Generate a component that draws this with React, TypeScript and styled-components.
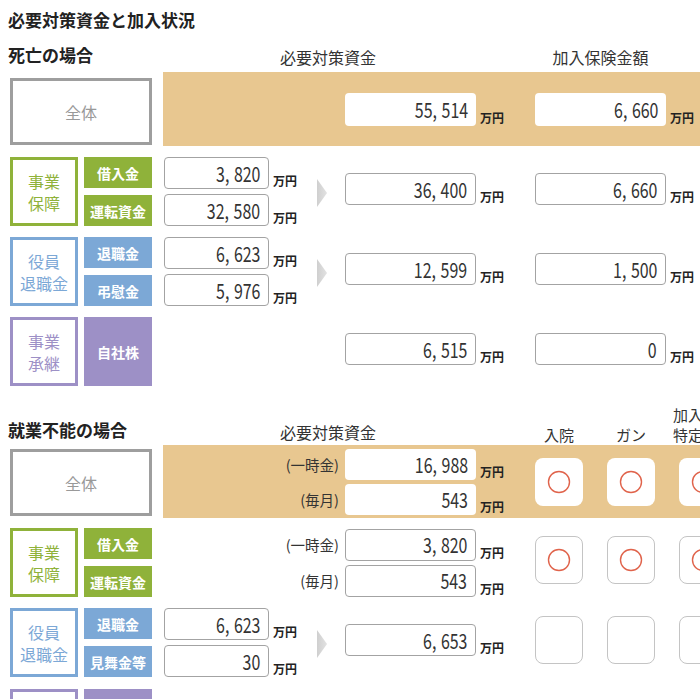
import React from "react";
import styled, { createGlobalStyle } from "styled-components";

const GlobalStyle = createGlobalStyle`
  html, body { margin: 0; padding: 0; background: #fff; overflow: hidden; }
  body { font-family: "Noto Sans CJK JP", "Noto Sans", sans-serif; color: #333; }
`;

const COLORS = {
  green: "#8fb23a",
  blue: "#7ca8d6",
  purple: "#9d90c6",
  band: "#e8c790",
  gray: "#9e9e9e",
};

const Page = styled.div`
  width: 900px;
  padding-top: 8px;
`;

const Title = styled.h1`
  margin: 0 0 0 8px;
  font-size: 17px;
  line-height: 24px;
  font-weight: 700;
  color: #222;
`;

const HeaderRow = styled.div<{ $h: number; $mt: number }>`
  display: flex;
  align-items: flex-end;
  height: ${(p) => p.$h}px;
  margin-top: ${(p) => p.$mt}px;
`;

const SectionTitle = styled.h2<{ $pb: number }>`
  margin: 0;
  flex: none;
  width: 163px;
  padding: 0 0 ${(p) => p.$pb}px 8px;
  box-sizing: border-box;
  font-size: 17px;
  line-height: 24px;
  font-weight: 700;
  color: #222;
  white-space: nowrap;
`;

const ColHead = styled.div<{ $w: number; $ml?: number; $pb: number; $fs?: number }>`
  flex: none;
  width: ${(p) => p.$w}px;
  margin-left: ${(p) => p.$ml ?? 0}px;
  padding-bottom: ${(p) => p.$pb}px;
  display: flex;
  flex-direction: column;
  align-items: center;
  font-size: ${(p) => p.$fs ?? 15}px;
  line-height: 20px;
  color: #333;
  white-space: nowrap;
`;

const Row = styled.div<{ $mt: number; $top?: boolean }>`
  display: flex;
  align-items: ${(p) => (p.$top ? "flex-start" : "center")};
  margin-top: ${(p) => p.$mt}px;
  padding-left: 10px;
`;

const Left = styled.div<{ $mt?: number }>`
  flex: none;
  width: 142px;
  display: flex;
  gap: 6px;
  margin-top: ${(p) => p.$mt ?? 0}px;
`;

const WholeBox = styled.div<{ $h: number }>`
  width: 142px;
  height: ${(p) => p.$h}px;
  box-sizing: border-box;
  border: 3px solid ${COLORS.gray};
  color: #999;
  font-size: 16px;
  display: flex;
  align-items: center;
  justify-content: center;
  background: #fff;
`;

const CategoryBox = styled.div<{ $c: string }>`
  width: 68px;
  height: 69px;
  box-sizing: border-box;
  border: 3px solid ${(p) => p.$c};
  color: ${(p) => p.$c};
  font-size: 16px;
  line-height: 22px;
  display: flex;
  align-items: center;
  justify-content: center;
  text-align: center;
  white-space: pre-line;
  background: #fff;
`;

const LabelStack = styled.div`
  display: flex;
  flex-direction: column;
  gap: 7px;
`;

const Label = styled.div<{ $c: string; $tall?: boolean }>`
  width: 68px;
  height: ${(p) => (p.$tall ? 69 : 31)}px;
  background: ${(p) => p.$c};
  color: #fff;
  font-size: 14px;
  font-weight: 700;
  display: flex;
  align-items: center;
  justify-content: center;
  white-space: nowrap;
`;

const Right = styled.div<{ $band?: boolean; $h: number }>`
  flex: 1;
  margin-left: 11px;
  height: ${(p) => p.$h}px;
  background: ${(p) => (p.$band ? COLORS.band : "transparent")};
  display: flex;
  align-items: center;
`;

const ColA = styled.div`
  flex: none;
  width: 182px;
  display: flex;
  align-items: center;
`;

const ColB = styled.div<{ $lift?: number }>`
  flex: none;
  width: 190px;
  display: flex;
  align-items: center;
  margin-bottom: ${(p) => p.$lift ?? 0}px;
`;

const ColC = styled.div<{ $lift?: number }>`
  flex: none;
  display: flex;
  align-items: center;
  margin-bottom: ${(p) => p.$lift ?? 0}px;
`;

const Stack = styled.div<{ $gap: number }>`
  display: flex;
  flex-direction: column;
  gap: ${(p) => p.$gap}px;
`;

const LeftInputs = styled(Stack)`
  margin-left: 1px;
`;

const Line = styled.div`
  width: 372px;
  display: flex;
  align-items: center;
`;

const Caption = styled.div`
  flex: none;
  width: 182px;
  padding-right: 6px;
  box-sizing: border-box;
  text-align: right;
  font-size: 14.5px;
  color: #333;
  white-space: nowrap;
`;

const Chevron = styled.svg`
  flex: none;
  margin-left: auto;
  margin-right: 18px;
  margin-top: 2px;
`;

const Field = styled.div`
  display: flex;
  align-items: flex-end;
`;

const InputBox = styled.div<{ $w: number; $h: number; $band?: boolean }>`
  width: ${(p) => p.$w}px;
  height: ${(p) => p.$h}px;
  box-sizing: border-box;
  border-radius: 4px;
  border: ${(p) => (p.$band ? "none" : "1px solid #a3a3a3")};
  background: #fff;
  display: flex;
  align-items: center;
  justify-content: flex-end;
  padding-right: 8px;
  overflow: hidden;
`;

const Unit = styled.span`
  margin-left: 4px;
  margin-bottom: 1px;
  font-size: 12px;
  line-height: 14px;
  font-weight: 700;
  color: #222;
  white-space: nowrap;
`;

const NumText = styled.span`
  display: inline-block;
  font-size: 21px;
  line-height: 1;
  transform: scaleX(0.76);
  transform-origin: right center;
  color: #333;
  white-space: nowrap;
`;

const Comma = styled.span`
  margin-right: 6px;
`;

const Cells = styled.div<{ $lift?: number }>`
  display: flex;
  gap: 24px;
  margin-bottom: ${(p) => p.$lift ?? 0}px;
`;

const CheckCell = styled.div<{ $band?: boolean }>`
  width: 48px;
  height: 48px;
  box-sizing: border-box;
  border-radius: 8px;
  background: #fff;
  border: ${(p) => (p.$band ? "none" : "1.5px solid #c4c4c4")};
  display: flex;
  align-items: center;
  justify-content: center;
`;

function Num({ v }: { v: string }) {
  const parts = v.split(",");
  return (
    <NumText>
      {parts.map((p, i) =>
        i < parts.length - 1 ? (
          <React.Fragment key={i}>
            {p}
            <Comma>,</Comma>
          </React.Fragment>
        ) : (
          <React.Fragment key={i}>{p}</React.Fragment>
        )
      )}
    </NumText>
  );
}

function Input({ v, w, h, band }: { v: string; w: number; h: number; band?: boolean }) {
  return (
    <Field>
      <InputBox $w={w} $h={h} $band={band}>
        <Num v={v} />
      </InputBox>
      <Unit>万円</Unit>
    </Field>
  );
}

function Arrow() {
  return (
    <Chevron width="10" height="28" viewBox="0 0 10 28">
      <defs>
        <linearGradient id="chev" x1="0" x2="1" y1="0" y2="0">
          <stop offset="0" stopColor="#cfcfcf" />
          <stop offset="1" stopColor="#e2e2e2" />
        </linearGradient>
      </defs>
      <polygon points="0,0 10,14 0,28" fill="url(#chev)" />
    </Chevron>
  );
}

function Mark() {
  return (
    <svg width="24" height="24" viewBox="0 0 24 24">
      <circle cx="12" cy="12" r="10.5" fill="none" stroke="#e0634b" strokeWidth="1.4" />
    </svg>
  );
}

function CellRow({ marks, band, lift }: { marks: boolean; band?: boolean; lift?: number }) {
  return (
    <Cells $lift={lift}>
      {[0, 1, 2].map((i) => (
        <CheckCell key={i} $band={band}>
          {marks && <Mark />}
        </CheckCell>
      ))}
    </Cells>
  );
}

type Cat = { name: string; color: string; labels: string[] };

const CATS: Cat[] = [
  { name: "事業\n保障", color: COLORS.green, labels: ["借入金", "運転資金"] },
  { name: "役員\n退職金", color: COLORS.blue, labels: ["退職金", "弔慰金"] },
  { name: "事業\n承継", color: COLORS.purple, labels: ["自社株"] },
];

function CatLeft({ cat, labels }: { cat: Cat; labels?: string[] }) {
  const ls = labels ?? cat.labels;
  return (
    <Left>
      <CategoryBox $c={cat.color}>{cat.name}</CategoryBox>
      <LabelStack>
        {ls.map((l) => (
          <Label key={l} $c={cat.color} $tall={ls.length === 1}>
            {l}
          </Label>
        ))}
      </LabelStack>
    </Left>
  );
}

const death = [
  { cat: CATS[0], left: ["3,820", "32,580"], need: "36,400", ins: "6,660" },
  { cat: CATS[1], left: ["6,623", "5,976"], need: "12,599", ins: "1,500" },
  { cat: CATS[2], left: [] as string[], need: "6,515", ins: "0" },
];

export default function App() {
  return (
    <Page>
      <GlobalStyle />
      <Title>必要対策資金と加入状況</Title>

      <HeaderRow $h={40} $mt={0}>
        <SectionTitle $pb={5}>死亡の場合</SectionTitle>
        <ColHead $w={330} $pb={5} $fs={16}>必要対策資金</ColHead>
        <ColHead $w={131} $ml={42} $pb={5} $fs={16}>加入保険金額</ColHead>
      </HeaderRow>

      <Row $mt={0} $top>
        <Left $mt={6}>
          <WholeBox $h={67}>全体</WholeBox>
        </Left>
        <Right $band $h={74}>
          <ColA />
          <ColB>
            <Input v="55,514" w={131} h={33} band />
          </ColB>
          <ColC>
            <Input v="6,660" w={131} h={33} band />
          </ColC>
        </Right>
      </Row>

      {death.map((r) => (
        <Row key={r.need} $mt={11}>
          <CatLeft cat={r.cat} />
          <Right $h={69}>
            <ColA>
              {r.left.length > 0 && (
                <>
                  <LeftInputs $gap={5}>
                    {r.left.map((v) => (
                      <Input key={v} v={v} w={105} h={32} />
                    ))}
                  </LeftInputs>
                  <Arrow />
                </>
              )}
            </ColA>
            <ColB $lift={5}>
              <Input v={r.need} w={131} h={32} />
            </ColB>
            <ColC $lift={5}>
              <Input v={r.ins} w={131} h={32} />
            </ColC>
          </Right>
        </Row>
      ))}

      <HeaderRow $h={44} $mt={15}>
        <SectionTitle $pb={3}>就業不能の場合</SectionTitle>
        <ColHead $w={330} $pb={3} $fs={16}>必要対策資金</ColHead>
        <ColHead $w={48} $ml={42} $pb={0}>入院</ColHead>
        <ColHead $w={48} $ml={24} $pb={0}>ガン</ColHead>
        <ColHead $w={48} $ml={24} $pb={0}>
          <span>加入保険</span>
          <span>特定疾病</span>
        </ColHead>
      </HeaderRow>

      <Row $mt={0} $top>
        <Left $mt={4}>
          <WholeBox $h={67}>全体</WholeBox>
        </Left>
        <Right $band $h={73}>
          <Stack $gap={4}>
            <Line>
              <Caption>(一時金)</Caption>
              <Input v="16,988" w={131} h={31} band />
            </Line>
            <Line>
              <Caption>(毎月)</Caption>
              <Input v="543" w={131} h={31} band />
            </Line>
          </Stack>
          <CellRow marks band />
        </Right>
      </Row>

      <Row $mt={10}>
        <CatLeft cat={CATS[0]} />
        <Right $h={69}>
          <Stack $gap={4}>
            <Line>
              <Caption>(一時金)</Caption>
              <Input v="3,820" w={131} h={32} />
            </Line>
            <Line>
              <Caption>(毎月)</Caption>
              <Input v="543" w={131} h={32} />
            </Line>
          </Stack>
          <CellRow marks lift={6} />
        </Right>
      </Row>

      <Row $mt={11}>
        <CatLeft cat={CATS[1]} labels={["退職金", "見舞金等"]} />
        <Right $h={69}>
          <ColA>
            <LeftInputs $gap={5}>
              <Input v="6,623" w={105} h={32} />
              <Input v="30" w={105} h={32} />
            </LeftInputs>
            <Arrow />
          </ColA>
          <ColB $lift={5}>
            <Input v="6,653" w={131} h={32} />
          </ColB>
          <CellRow marks={false} lift={5} />
        </Right>
      </Row>

      <Row $mt={12}>
        <CatLeft cat={CATS[2]} />
        <Right $h={69}>
          <ColA />
          <ColB>
            <Input v="0" w={131} h={32} />
          </ColB>
          <CellRow marks={false} />
        </Right>
      </Row>
    </Page>
  );
}
